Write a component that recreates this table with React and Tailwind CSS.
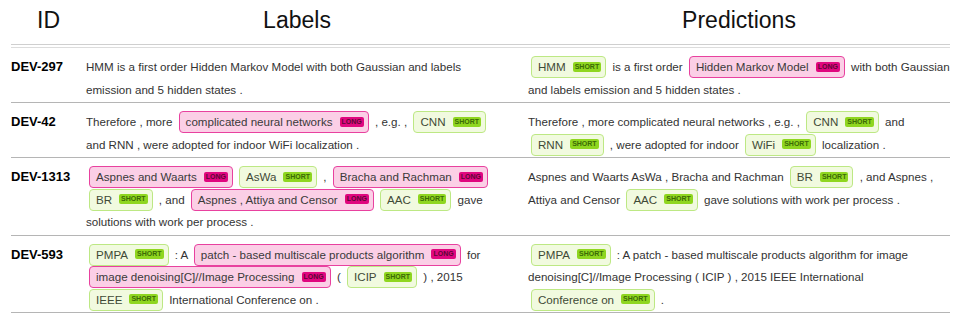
import React from 'react';

const rows = [
  {
    id: 'DEV-297',
    labels: ['HMM is a first order Hidden Markov Model with both Gaussian and labels emission and 5 hidden states .'],
    preds: [['HMM', 'S'], 'is a first order', ['Hidden Markov Model', 'L'], 'with both Gaussian and labels emission and 5 hidden states .'],
  },
  {
    id: 'DEV-42',
    labels: ['Therefore , more', ['complicated neural networks', 'L'], ', e.g. ,', ['CNN', 'S'], 'and RNN , were adopted for indoor WiFi localization .'],
    preds: ['Therefore , more complicated neural networks , e.g. ,', ['CNN', 'S'], 'and', ['RNN', 'S'], ', were adopted for indoor', ['WiFi', 'S'], 'localization .'],
  },
  {
    id: 'DEV-1313',
    labels: [['Aspnes and Waarts', 'L'], ['AsWa', 'S'], ',', ['Bracha and Rachman', 'L'], ['BR', 'S'], ', and', ['Aspnes , Attiya and Censor', 'L'], ['AAC', 'S'], 'gave solutions with work per process .'],
    preds: ['Aspnes and Waarts AsWa , Bracha and Rachman', ['BR', 'S'], ', and Aspnes , Attiya and Censor', ['AAC', 'S'], 'gave solutions with work per process .'],
  },
  {
    id: 'DEV-593',
    labels: [['PMPA', 'S'], ': A', ['patch - based multiscale products algorithm', 'L'], 'for', ['image denoising[C]//Image Processing', 'L'], '(', ['ICIP', 'S'], ') , 2015', ['IEEE', 'S'], 'International Conference on .'],
    preds: [['PMPA', 'S'], ': A patch - based multiscale products algorithm for image denoising[C]//Image Processing ( ICIP ) , 2015 IEEE International', ['Conference on', 'S'], '.'],
  },
];

const Tag = ({ text, kind }) => {
  const long = kind === 'L';
  return (
    <span
      className={`inline-block whitespace-nowrap mx-[3px] rounded-[4px] border pl-[6px] pr-[4px] py-[2px] leading-[16px] ${
        long ? 'bg-[#fbcfe6] border-[#e8419f] text-[#3a3a3a]' : 'bg-[#f1fadf] border-[#bde884] text-[#3f4a36]'
      }`}
    >
      {text}
      <span
        className={`inline-block align-middle ml-[7px] mb-[2px] rounded-[2px] px-[2px] text-[7px] font-bold leading-[10px] ${
          long ? 'bg-[#e0077f] text-[#5c0634]' : 'bg-[#8fd620] text-[#3b6a06]'
        }`}
      >
        {long ? 'LONG' : 'SHORT'}
      </span>
    </span>
  );
};

const Cell = ({ parts }) => (
  <div className="text-[11.6px] leading-[22.5px] text-[#333]">
    {parts.map((p, i) =>
      typeof p === 'string' ? (
        <span key={i}>{' ' + p + ' '}</span>
      ) : (
        <Tag key={i} text={p[0]} kind={p[1]} />
      )
    )}
  </div>
);

export default function App() {
  return (
    <div className="w-[969px] h-[323px] bg-white font-['Liberation_Sans',Arial,sans-serif] overflow-hidden">
      <div className="ml-[11px] w-[939px]">
        <div className="grid grid-cols-[75px_442px_422px] h-[45px] border-b border-[#cfcfcf] text-[23px] leading-[28px] text-[#111] text-center pt-[6px]">
          <div>ID</div>
          <div className="pr-[20px]">Labels</div>
          <div>Predictions</div>
        </div>
        <div className="mt-[2px] border-t border-[#dcdcdc]">
          {rows.map(r => (
            <div key={r.id} className="grid grid-cols-[75px_442px_422px] border-b border-[#b5b5b5] pt-[8px] pb-[1px]">
              <div className="text-[13px] font-bold leading-[22.5px] text-black">{r.id}</div>
              <div className="pr-[20px]">
                <Cell parts={r.labels} />
              </div>
              <Cell parts={r.preds} />
            </div>
          ))}
        </div>
      </div>
    </div>
  );
}
